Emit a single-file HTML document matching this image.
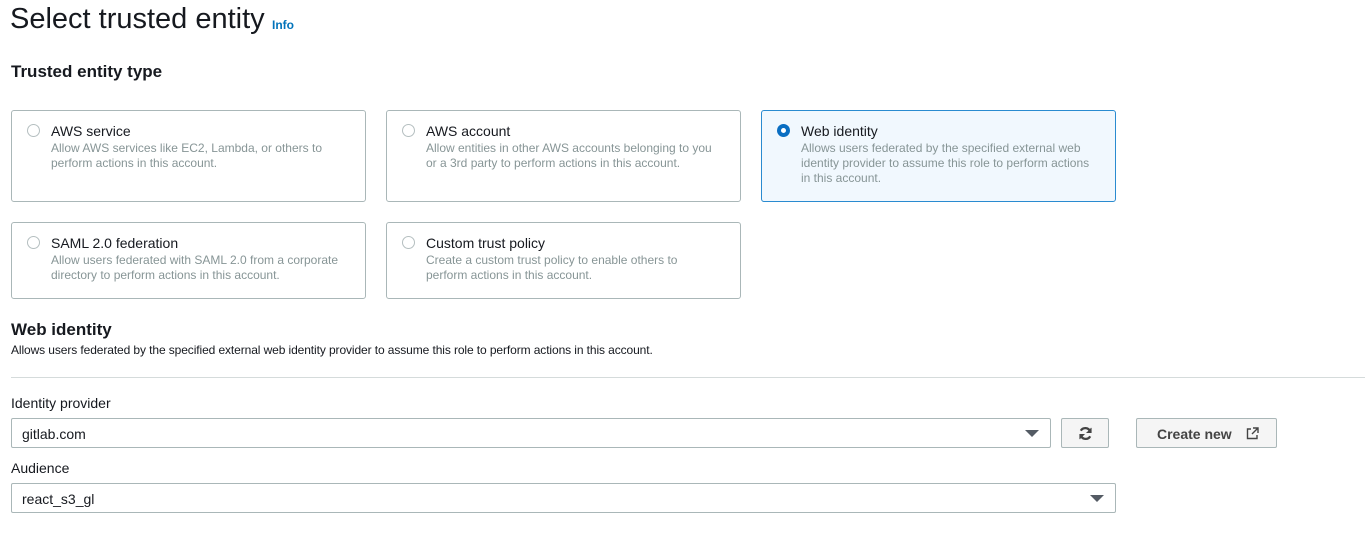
<!DOCTYPE html>
<html><head><style>
body{margin:0;width:1365px;height:544px;background:#fff;font-family:"Liberation Sans",Arial,sans-serif;color:#16191f;position:relative;overflow:hidden}
.a{position:absolute}
.card{position:absolute;border:1px solid #aab7b8;border-radius:3px;box-sizing:border-box;background:#fff}
.card.sel{border-color:#2a8bd0;background:#f1f8fe}
.rad{position:absolute;left:15px;top:13px;width:13px;height:13px;border:1px solid #b5bfc0;border-radius:50%;box-sizing:border-box;background:#fff}
.sel .rad{border:4px solid #0a6ec2}
.t{position:absolute;left:39px;top:12px;font-size:14px;color:#16191f}
.d{position:absolute;left:39px;top:30px;font-size:12px;line-height:15px;color:#879596;width:292px}
.inp{position:absolute;border:1px solid #aab7b8;border-radius:2px;box-sizing:border-box;font-size:14px;padding:7px 10px}
.tri{position:absolute;right:11px;top:11px;width:0;height:0;border-left:7px solid transparent;border-right:7px solid transparent;border-top:7px solid #545b64}
.btn{position:absolute;border:1px solid #aab7b8;border-radius:2px;box-sizing:border-box;background:#f5f5f5;font-size:14px;font-weight:bold;color:#444}
</style></head><body>
<div class="a" style="left:10px;top:3px;font-size:29px;color:#16191f">Select trusted entity</div>
<div class="a" style="left:272px;top:18px;font-size:12px;font-weight:bold;color:#0073bb">Info</div>
<div class="a" style="left:11px;top:62px;font-size:17px;font-weight:bold">Trusted entity type</div>

<div class="card" style="left:11px;top:110px;width:355px;height:92px"><div class="rad"></div><div class="t">AWS service</div><div class="d">Allow AWS services like EC2, Lambda, or others to perform actions in this account.</div></div>
<div class="card" style="left:386px;top:110px;width:355px;height:92px"><div class="rad"></div><div class="t">AWS account</div><div class="d">Allow entities in other AWS accounts belonging to you or a 3rd party to perform actions in this account.</div></div>
<div class="card sel" style="left:761px;top:110px;width:355px;height:92px"><div class="rad"></div><div class="t">Web identity</div><div class="d">Allows users federated by the specified external web identity provider to assume this role to perform actions in this account.</div></div>
<div class="card" style="left:11px;top:222px;width:355px;height:77px"><div class="rad"></div><div class="t">SAML 2.0 federation</div><div class="d">Allow users federated with SAML 2.0 from a corporate directory to perform actions in this account.</div></div>
<div class="card" style="left:386px;top:222px;width:355px;height:77px"><div class="rad"></div><div class="t">Custom trust policy</div><div class="d">Create a custom trust policy to enable others to perform actions in this account.</div></div>

<div class="a" style="left:11px;top:320px;font-size:17px;font-weight:bold">Web identity</div>
<div class="a" style="left:11px;top:343px;font-size:12px;color:#16191f;letter-spacing:-0.1px">Allows users federated by the specified external web identity provider to assume this role to perform actions in this account.</div>
<div class="a" style="left:11px;top:377px;width:1354px;height:1px;background:#d5dbdb"></div>

<div class="a" style="left:11px;top:395px;font-size:14px;color:#16191f">Identity provider</div>
<div class="inp" style="left:11px;top:418px;width:1040px;height:30px">gitlab.com<div class="tri"></div></div>
<div class="btn" style="left:1061px;top:418px;width:48px;height:30px">
<svg class="a" style="left:16px;top:7px" width="15" height="15" viewBox="0 0 16 16" fill="none" stroke="#444" stroke-width="2.4"><path d="M13 6A5.5 5.5 0 0 0 3 5"/><path d="M3 10a5.5 5.5 0 0 0 10 1"/><path d="M14 2v5H9" fill="#444" stroke-width="1"/><path d="M2 14V9h5" fill="#444" stroke-width="1"/></svg></div>
<div class="btn" style="left:1136px;top:418px;width:141px;height:30px"><span class="a" style="left:20px;top:7px">Create new</span>
<svg class="a" style="left:109px;top:8px" width="13" height="13" viewBox="0 0 13 13" fill="none" stroke="#444" stroke-width="1.4"><path d="M5 2H1.5v9.5H11V8"/><path d="M7 1h5v5M12 1L6 7"/></svg></div>

<div class="a" style="left:11px;top:460px;font-size:14px;color:#16191f">Audience</div>
<div class="inp" style="left:11px;top:483px;width:1105px;height:30px">react_s3_gl<div class="tri"></div></div>
</body></html>
